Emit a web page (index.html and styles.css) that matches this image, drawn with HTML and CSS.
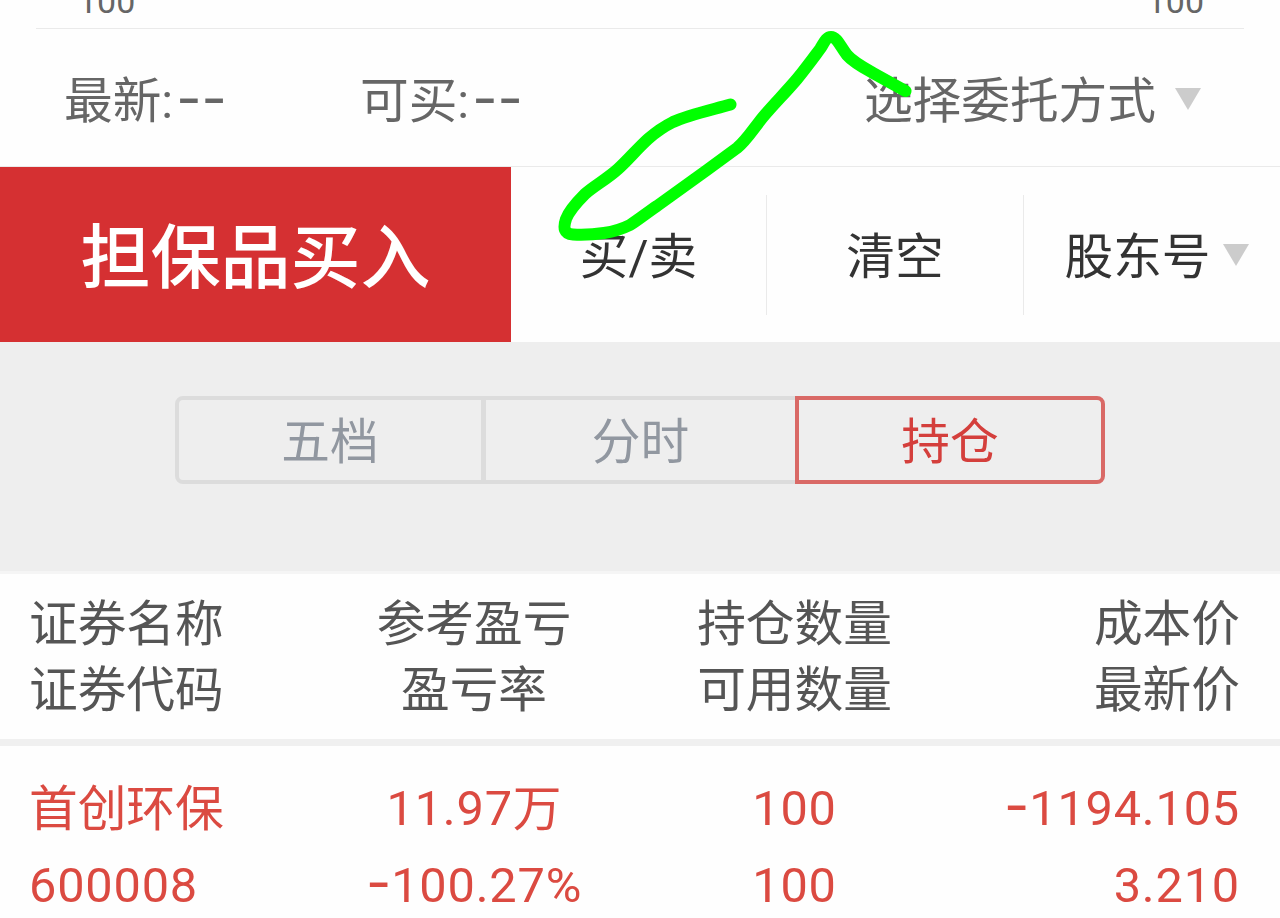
FILE: index.html
```html
<!DOCTYPE html>
<html lang="zh-CN">
<head>
  <meta charset="UTF-8">
  <meta name="viewport" content="width=device-width, initial-scale=1.0">
  <title>担保品买入</title>
  <link rel="stylesheet" href="styles.css">
</head>
<body>
  <div class="page">
    <!-- 数量 -->
    <div class="amount-row">
      <span>100</span>
      <span>100</span>
    </div>

    <!-- 行情信息 -->
    <div class="info-row">
      <span class="latest">最新:<span class="dash">--</span></span>
      <span class="buyable">可买:<span class="dash">--</span></span>
      <span class="entrust">选择委托方式</span>
      <svg class="arrow" viewBox="0 0 26 22"><path d="M0 0h26L13 22z"/></svg>
    </div>

    <!-- 操作按钮 -->
    <div class="action-row">
      <button class="buy-btn">担保品买入</button>
      <button class="action">买/卖</button>
      <button class="action clear">清空</button>
      <button class="action account">股东号<svg class="arrow" viewBox="0 0 26 22"><path d="M0 0h26L13 22z"/></svg></button>
    </div>

    <!-- 切换标签 -->
    <div class="tab-area">
      <div class="tabs">
        <button class="tab">五档</button>
        <button class="tab">分时</button>
        <button class="tab active">持仓</button>
      </div>
    </div>

    <!-- 持仓列表 -->
    <div class="grid table-head">
      <div class="cell">证券名称<br>证券代码</div>
      <div class="cell">参考盈亏<br>盈亏率</div>
      <div class="cell">持仓数量<br>可用数量</div>
      <div class="cell">成本价<br>最新价</div>
    </div>
    <div class="grid table-row">
      <div class="cell"><span class="name">首创环保</span><br>600008</div>
      <div class="cell">11.97<span class="name">万</span><br><span class="dash">-</span>100.27%</div>
      <div class="cell">100<br>100</div>
      <div class="cell"><span class="dash">-</span>1194.105<br>3.210</div>
    </div>

    <!-- 手绘标记 -->
    <svg class="mark" viewBox="0 0 1280 918">
      <path d="M730.5 104.5C711 110 688 115 673 122C665 126 656 132 648 139C637 149 628 160 618 169C607 179 594 186 585 194C578 201 569 211 566 219C563 228 564 234 573 234.500C583 235 594 234.500 604 233C614 231.500 622 229 630 225C638 220 648 212 657 206L707 170L737 148C746 141 754 128 763 117C774 104 786 92 797 79C806 68 814 57 820 49C824 43 826 37 831 37C837 37 840 46 847 55C853 62 864 68 873 73L905.500 91"/>
    </svg>
  </div>
</body>
</html>
```
FILE: styles.css
```css
body {
  margin: 0;
  background-color: #fefefe;
  font-family: Roboto, "Noto Sans CJK SC", sans-serif;
  font-size: 48.7px;
  color: #666;
}
button {
  font: inherit;
  padding: 0 0 4px;
  margin: 0;
  border: none;
  background: none;
}
.page {
  position: relative;
  width: 1280px;
  height: 918px;
  overflow: hidden;
}
.dash {
  font-family: Inter, sans-serif;
  font-size: 55px;
  line-height: 0;
  letter-spacing: 0;
}
.arrow {
  width: 26px;
  height: 22px;
  fill: #ccc;
}

.amount-row {
  display: flex;
  justify-content: space-between;
  align-items: flex-end;
  height: 28px;
  margin: 0 36px;
  padding: 0 40px 0 42px;
  box-sizing: border-box;
  box-shadow: 0 1px 0 #eaeaea;
  font-size: 34px;
  line-height: 54px;
}

.info-row {
  display: flex;
  align-items: center;
  height: 137px;
  margin-top: 1px;
  padding: 0 79px 0 64px;
  border-bottom: 1px solid #eaeaea;
}
.info-row span {
  padding-bottom: 2px;
}
.info-row .dash {
  margin-left: 3px;
}
.info-row .arrow {
  margin-top: 2px;
}
.latest {
  width: 296px;
}
.entrust {
  margin-left: auto;
  margin-right: 19px;
}

.action-row {
  display: flex;
  align-items: center;
  height: 175px;
}
.buy-btn {
  width: 511px;
  height: 175px;
  background-color: #d53032;
  color: #fff;
  font-size: 70px;
  font-weight: 500;
}
.action {
  width: 256px;
  height: 120px;
  border-right: 1px solid #eaeaea;
  box-sizing: border-box;
  color: #333;
}
.action.clear {
  width: 257px;
}
.action.account {
  flex: 1;
  display: flex;
  align-items: center;
  justify-content: center;
  gap: 12px;
  border-right: none;
  padding-left: 9px;
}
.account .arrow {
  margin-top: 5px;
}

.tab-area {
  height: 229px;
  padding-top: 54px;
  box-sizing: border-box;
  background-color: #eee;
}
.tabs {
  display: flex;
  width: 930px;
  height: 88px;
  margin: 0 auto;
}
.tab {
  width: 310px;
  box-sizing: border-box;
  border: 4px solid #dcdcdc;
  color: #9197a0;
}
.tab:first-child {
  border-radius: 8px 0 0 8px;
}
.tab:nth-child(2) {
  border-left-width: 1px;
  border-right: none;
}
.tab.active {
  border-color: #d96966;
  border-radius: 0 8px 8px 0;
  color: #d43f3c;
}

.grid {
  display: grid;
  grid-template-columns: 285px 320px 321px 1fr;
  padding: 0 40px 0 29px;
}
.cell {
  text-align: center;
  white-space: nowrap;
}
.cell:first-child {
  text-align: left;
}
.cell:last-child {
  text-align: right;
}
.table-head {
  height: 168px;
  padding-top: 18px;
  box-sizing: border-box;
  border-top: 3px solid #f5f5f5;
  line-height: 66px;
  color: #555;
}
.table-row {
  border-top: 7px solid #f0f0f0;
  padding-top: 24px;
  line-height: 77px;
  letter-spacing: 0.8px;
  color: #db4a41;
}
.name {
  line-height: 0;
  letter-spacing: 0;
  vertical-align: -1px;
}

.mark {
  position: absolute;
  top: 0;
  left: 0;
  width: 1280px;
  height: 918px;
  fill: none;
  stroke: #0f0;
  stroke-width: 12;
  stroke-linecap: round;
  stroke-linejoin: round;
  pointer-events: none;
}
```
